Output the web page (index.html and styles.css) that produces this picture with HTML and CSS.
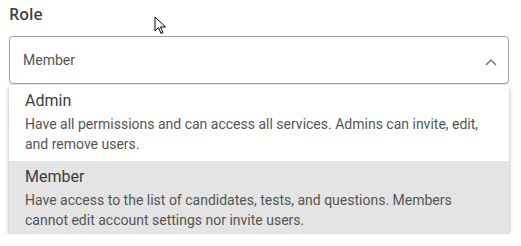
FILE: index.html
```html
<!DOCTYPE html>
<html lang="en">
<head>
    <meta charset="UTF-8">
    <meta name="viewport" content="width=device-width, initial-scale=1.0">
    <title>Role</title>
    <link rel="stylesheet" href="styles.css">
</head>
<body>

    <div class="field">
        <div class="field-label">Role</div>

        <!-- Select box -->
        <div class="select">
            <span class="select-value">Member</span>
            <svg class="chevron" width="12" height="8" viewBox="0 0 12 8">
                <path d="M1 7 L6 2 L11 7" fill="none" stroke="#757575" stroke-width="1.5"/>
            </svg>
        </div>

        <!-- Dropdown menu -->
        <ul class="menu">
            <li class="option">
                <div class="option-title">Admin</div>
                <div class="option-desc">Have all permissions and can access all services. Admins can invite, edit, and remove users.</div>
            </li>
            <li class="option option-selected">
                <div class="option-title">Member</div>
                <div class="option-desc">Have access to the list of candidates, tests, and questions. Members cannot edit account settings nor invite users.</div>
            </li>
        </ul>
    </div>

    <!-- Mouse pointer -->
    <svg class="cursor" width="14" height="20" viewBox="0 0 14 20">
        <path d="M1 1 L1 15 L4.5 11.5 L7 17.5 L9 16.5 L6.5 11 L11.5 11 Z" fill="#fff" stroke="#000" stroke-width="1" stroke-linejoin="round"/>
    </svg>

</body>
</html>
```

FILE: styles.css
```css
/* Global Styles */
body {
    margin: 0;
    background-color: #fff;
    font-family: Roboto, "Liberation Sans", sans-serif;
}

.field {
    width: 500px;
    padding: 3px 0 0 9px;
}

.field-label {
    font-family: "Open Sans", "Noto Sans", sans-serif;
    font-weight: 600;
    font-size: 16px;
    line-height: 22px;
    color: #3d3d3d;
    margin-bottom: 11px;
}

/* Select box */
.select {
    height: 46px;
    border: 1px solid #9e9e9e;
    border-radius: 4px;
    display: flex;
    align-items: center;
    justify-content: space-between;
    padding: 0 11px 0 13px;
    box-shadow: 0 2px 2px rgba(0, 0, 0, 0.08);
}

.select-value {
    font-size: 14px;
    color: #555;
}

.chevron {
    margin-top: 4px;
}

/* Dropdown menu */
.menu {
    list-style: none;
    margin: 1px 0 0;
    padding: 0;
    background-color: #fff;
    border-radius: 0 0 4px 4px;
    box-shadow: 0 3px 5px rgba(0, 0, 0, 0.25), 0 1px 2px rgba(0, 0, 0, 0.12);
    overflow: hidden;
}

.option {
    padding: 5px 16px 7px;
}

.option-selected {
    background-color: #e4e4e4;
    padding-bottom: 4px;
}

.option-title {
    font-size: 16px;
    line-height: 22px;
    margin-bottom: 2px;
    color: #3d3d3d;
}

.option-desc {
    font-size: 14px;
    line-height: 20px;
    color: #555;
}

/* Mouse pointer overlay */
.cursor {
    position: absolute;
    left: 154px;
    top: 16px;
}
```
